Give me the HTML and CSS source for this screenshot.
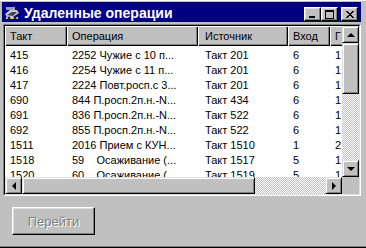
FILE: index.html
```html
<!DOCTYPE html>
<html lang="ru">
<head>
    <meta charset="utf-8">
    <title>Удаленные операции</title>
    <link rel="stylesheet" href="styles.css">
</head>
<body>
<div class="window">
    <div class="titlebar">
        <svg class="app-icon" width="16" height="16" viewBox="0 0 16 16">
            <rect x="2" y="2" width="9" height="3" fill="#9aa0b8"/>
            <path d="M1 9 L6 5 L13 5 L15 8 L9 12 L3 12 Z" fill="#c8c8d0"/>
            <path d="M3 10 L8 7 L13 7 L9 11 Z" fill="#404050"/>
            <rect x="2" y="12" width="12" height="2" fill="#e8d890"/>
            <circle cx="5" cy="13" r="1.5" fill="#202020"/>
            <circle cx="11" cy="13" r="1.5" fill="#202020"/>
        </svg>
        <span class="title">Удаленные операции</span>
        <div class="title-buttons">
            <div class="tb-btn"><span class="glyph-min"></span></div>
            <div class="tb-btn"><span class="glyph-max"></span></div>
            <div class="tb-btn close">
                <svg width="8" height="7" viewBox="0 0 8 7">
                    <path d="M0 0h2v1h1v1h2v-1h1v-1h2v1h-1v1h-1v1h-1v1h1v1h1v1h1v1h-2v-1h-1v-1h-2v1h-1v1h-2v-1h1v-1h1v-1h1v-1h-1v-1h-1v-1h-1z" fill="#000"/>
                </svg>
            </div>
        </div>
    </div>

    <div class="list">
        <div class="list-inner">
            <div class="list-view">
                <table>
                    <colgroup>
                        <col style="width: 62px">
                        <col style="width: 131px">
                        <col style="width: 90px">
                        <col style="width: 42px">
                        <col style="width: 60px">
                    </colgroup>
                    <thead>
                        <tr>
                            <th>Такт</th>
                            <th>Операция</th>
                            <th class="src">Источник</th>
                            <th>Вход</th>
                            <th>Г</th>
                        </tr>
                    </thead>
                    <tbody>
                        <tr class="first"><td>415</td><td>2252 Чужие с 10 п...</td><td class="src">Такт 201</td><td>6</td><td>1</td></tr>
                        <tr><td>416</td><td>2254 Чужие с 11 п...</td><td class="src">Такт 201</td><td>6</td><td>1</td></tr>
                        <tr><td>417</td><td>2224 Повт.росп.с 3...</td><td class="src">Такт 201</td><td>6</td><td>1</td></tr>
                        <tr><td>690</td><td>844 П.росп.2п.н.-N...</td><td class="src">Такт 434</td><td>6</td><td>1</td></tr>
                        <tr><td>691</td><td>836 П.росп.2п.н.-N...</td><td class="src">Такт 522</td><td>6</td><td>1</td></tr>
                        <tr><td>692</td><td>855 П.росп.2п.н.-N...</td><td class="src">Такт 522</td><td>6</td><td>1</td></tr>
                        <tr><td>1511</td><td>2016 Прием с КУН...</td><td class="src">Такт 1510</td><td>1</td><td>2</td></tr>
                        <tr><td>1518</td><td>59    Осаживание (...</td><td class="src">Такт 1517</td><td>5</td><td>1</td></tr>
                        <tr><td>1520</td><td>60    Осаживание (...</td><td class="src">Такт 1519</td><td>5</td><td>1</td></tr>
                    </tbody>
                </table>
            </div>

            <div class="vscroll">
                <div class="sb-btn"><span class="arrow-up"></span></div>
                <div class="sb-thumb v"></div>
                <div class="sb-track"></div>
                <div class="sb-btn"><span class="arrow-down"></span></div>
            </div>

            <div class="hscroll">
                <div class="sb-btn"><span class="arrow-left"></span></div>
                <div class="sb-thumb h"></div>
                <div class="sb-track"></div>
                <div class="sb-btn"><span class="arrow-right"></span></div>
            </div>

            <div class="corner"></div>
        </div>
    </div>

    <div class="footer">
        <button class="btn" type="button" disabled>Перейти</button>
    </div>
</div>
</body>
</html>
```

FILE: styles.css
```css
body {
    margin: 0;
    width: 366px;
    height: 248px;
    overflow: hidden;
    background-color: #c0c0c0;
    font-family: "Liberation Sans", Arial, sans-serif;
    font-size: 11px;
    color: #000;
}

.window {
    height: 248px;
    box-sizing: border-box;
    padding: 2px 5px 0 2px;
    display: flex;
    flex-direction: column;
    border-bottom: 1px solid #000;
    box-shadow: inset 0 -1px #808080, inset 0 1px #fff;
}

/* title bar */
.titlebar {
    height: 20px;
    flex-shrink: 0;
    background-color: #000080;
    display: flex;
    align-items: center;
    padding: 1px 3px 0 2px;
    box-sizing: border-box;
}

.app-icon {
    margin-right: 4px;
}

.title {
    color: #fff;
    font-weight: bold;
    font-size: 14px;
}

.title-buttons {
    margin-left: auto;
    display: flex;
    align-self: flex-end;
    margin-bottom: 1px;
}

.tb-btn {
    width: 17px;
    height: 14px;
    box-sizing: border-box;
    background-color: #c0c0c0;
    border: 1px solid;
    border-color: #fff #000 #000 #fff;
    box-shadow: inset -1px -1px #808080, inset 1px 1px #dfdfdf;
    display: flex;
    align-items: center;
    justify-content: center;
}

.tb-btn.close {
    margin-left: 3px;
}

.glyph-min {
    width: 6px;
    height: 2px;
    background-color: #000;
    margin-top: 6px;
    margin-right: 2px;
}

.glyph-max {
    width: 9px;
    height: 9px;
    box-sizing: border-box;
    border: 1px solid #000;
    border-top-width: 2px;
}

/* list view */
.list {
    margin: 2px 0 0 1px;
    height: 172px;
    box-sizing: border-box;
    border: 1px solid;
    border-color: #808080 #fff #fff #808080;
}

.list-inner {
    height: 100%;
    box-sizing: border-box;
    border: 1px solid;
    border-color: #000 #dfdfdf #dfdfdf #000;
    display: grid;
    grid-template-columns: 1fr 17px;
    grid-template-rows: 1fr 17px;
}

.list-view {
    background-color: #fff;
    overflow: hidden;
}

table {
    border-collapse: separate;
    border-spacing: 0;
    table-layout: fixed;
    width: 385px;
    white-space: pre;
}

th {
    height: 20px;
    padding: 0 0 0 5px;
    text-align: left;
    font-weight: normal;
    background-color: #c0c0c0;
    box-shadow: inset 1px 1px #fff, inset -1px -1px #000, inset -2px -2px #808080;
    overflow: hidden;
}

td {
    height: 15px;
    padding: 0 0 0 5px;
    overflow: hidden;
    line-height: 15px;
}

th.src,
td.src {
    padding-left: 7px;
}

tr.first td {
    padding-top: 2px;
}

/* scroll bars */
.vscroll {
    display: flex;
    flex-direction: column;
}

.hscroll {
    display: flex;
}

.sb-btn,
.sb-thumb {
    box-sizing: border-box;
    background-color: #c0c0c0;
    border: 1px solid;
    border-color: #dfdfdf #000 #000 #dfdfdf;
    box-shadow: inset 1px 1px #fff, inset -1px -1px #808080;
}

.sb-btn {
    width: 17px;
    height: 17px;
    flex-shrink: 0;
    display: flex;
    align-items: center;
    justify-content: center;
}

.sb-thumb.v {
    height: 51px;
}

.sb-thumb.h {
    width: 233px;
}

.sb-track {
    flex: 1;
    background: repeating-conic-gradient(#c0c0c0 0% 25%, #fff 0% 50%) 0 0 / 2px 2px;
}

.arrow-up,
.arrow-down,
.arrow-left,
.arrow-right {
    width: 0;
    height: 0;
    border: 4px solid transparent;
}

.arrow-up {
    border-top: 0;
    border-bottom-color: #000;
}

.arrow-down {
    border-bottom: 0;
    border-top-color: #000;
}

.arrow-left {
    border-left: 0;
    border-right-color: #000;
}

.arrow-right {
    border-right: 0;
    border-left-color: #000;
}

.corner {
    background-color: #c0c0c0;
}

/* footer */
.footer {
    padding: 11px 0 0 10px;
}

.btn {
    width: 83px;
    height: 28px;
    background-color: #c0c0c0;
    border: 1px solid;
    border-color: #fff #000 #000 #fff;
    box-shadow: inset -1px -1px #808080, inset 1px 1px #dfdfdf;
    font-family: "Liberation Sans", Arial, sans-serif;
    font-size: 13px;
    color: #808080;
    text-shadow: 1px 1px #fff;
    padding: 0;
}
```
